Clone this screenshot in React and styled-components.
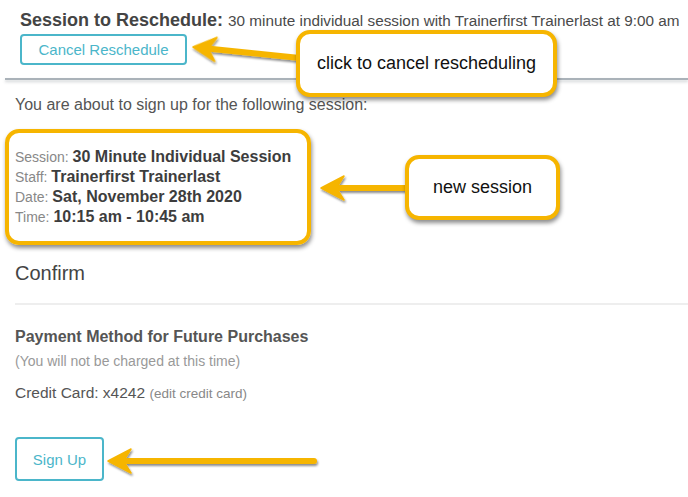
import React from 'react';
import styled, { createGlobalStyle } from 'styled-components';

const colors = {
  text: '#555',
  dark: '#3d3d3d',
  muted: '#999',
  teal: '#4bb6ca',
  orange: '#f6b500',
};

const GlobalStyle = createGlobalStyle`
  html, body { margin: 0; padding: 0; background: #fff; }
  body {
    font-family: "Liberation Sans", Arial, sans-serif;
    color: ${colors.text};
    -webkit-font-smoothing: antialiased;
  }
`;

const Page = styled.div`
  position: relative;
  width: 688px;
  height: 497px;
  overflow: hidden;
`;

const Header = styled.header`
  padding: 10px 0 0 20px;
`;

const RescheduleLine = styled.div`
  height: 20px;
  line-height: 20px;
  font-size: 15.3px;
  color: #4a4a4a;
  white-space: nowrap;

  strong {
    font-size: 18px;
    color: #444;
    margin-right: 5px;
  }
`;

const OutlineButton = styled.button`
  display: flex;
  align-items: center;
  justify-content: center;
  box-sizing: border-box;
  width: ${(p) => p.$w}px;
  height: ${(p) => p.$h}px;
  margin-top: ${(p) => p.$top || 0}px;
  padding: 0;
  background: #fff;
  border: 2px solid ${colors.teal};
  border-radius: 4px;
  font-family: "Liberation Sans", Arial, sans-serif;
  font-size: 15px;
  color: ${colors.teal};
  cursor: pointer;
`;

const Rule = styled.div`
  margin: 13px 0 0 5px;
  height: 2px;
  background: #aab2b9;
  box-shadow: 0 2px 3px rgba(60, 70, 80, 0.25);
`;

const Main = styled.main`
  padding: 15px 0 0 15px;
`;

const Intro = styled.p`
  margin: 0;
  height: 20px;
  line-height: 20px;
  font-size: 16px;
  color: ${colors.text};
`;

const Details = styled.div`
  position: relative;
  margin-top: 32px;
`;

const DetailRow = styled.div`
  height: 20px;
  line-height: 20px;
  font-size: 14px;
  color: #888;

  strong {
    font-size: 16px;
    color: ${colors.dark};
  }
`;

const Confirm = styled.h2`
  margin: 34px 0 0;
  height: 24px;
  line-height: 24px;
  font-size: 20px;
  font-weight: normal;
  color: #444;
`;

const Divider = styled.div`
  margin-top: 18px;
  height: 2px;
  background: #eeeeee;
`;

const PaymentTitle = styled.h3`
  margin: 22px 0 0;
  height: 20px;
  line-height: 20px;
  font-size: 16px;
  font-weight: bold;
  color: ${colors.text};
`;

const Note = styled.p`
  margin: 5px 0 0;
  height: 18px;
  line-height: 18px;
  font-size: 14px;
  color: ${colors.muted};
`;

const CardLine = styled.p`
  margin: 13px 0 0;
  height: 20px;
  line-height: 20px;
  font-size: 15.5px;
  color: ${colors.text};

  small {
    font-size: 13.5px;
    color: #888;
  }
`;

/* annotation layer */

const Callout = styled.div`
  position: absolute;
  left: ${(p) => p.$x}px;
  top: ${(p) => p.$y}px;
  width: ${(p) => p.$w}px;
  height: ${(p) => p.$h}px;
  box-sizing: border-box;
  display: flex;
  align-items: center;
  justify-content: center;
  border: 4px solid ${colors.orange};
  border-radius: 14px;
  background: #fff;
  box-shadow: 1px 3px 4px rgba(0, 0, 0, 0.45);
  font-size: 18px;
  color: #111;
  z-index: 2;
`;

const Frame = styled.div`
  position: absolute;
  left: -10px;
  top: -18px;
  width: 306px;
  height: 116px;
  box-sizing: border-box;
  border: 4px solid ${colors.orange};
  border-radius: 14px;
  box-shadow: 1px 3px 4px rgba(0, 0, 0, 0.45);
  pointer-events: none;
`;

const Arrows = styled.svg`
  position: absolute;
  inset: 0;
  z-index: 1;
  pointer-events: none;
`;

function Arrow({ from, to }) {
  const dx = from[0] - to[0];
  const dy = from[1] - to[1];
  const len = Math.sqrt(dx * dx + dy * dy);
  const angle = (Math.atan2(dy, dx) * 180) / Math.PI;
  return (
    <g transform={`translate(${to[0]} ${to[1]}) rotate(${angle})`} filter="url(#shadow)">
      <line x1="14" y1="0" x2={len} y2="0" stroke={colors.orange} strokeWidth="6" strokeLinecap="round" />
      <path d="M0 0 L23 -12 L17 -2.5 L17 2.5 L23 12 Z" fill={colors.orange} stroke={colors.orange} strokeWidth="1.5" strokeLinejoin="round" />
    </g>
  );
}

export default function App() {
  return (
    <>
      <GlobalStyle />
      <Page>
        <Header>
          <RescheduleLine>
            <strong>Session to Reschedule:</strong>
            30 minute individual session with Trainerfirst Trainerlast at 9:00 am
          </RescheduleLine>
          <OutlineButton $w={167} $h={31} $top={4}>Cancel Reschedule</OutlineButton>
        </Header>
        <Rule />
        <Main>
          <Intro>You are about to sign up for the following session:</Intro>
          <Details>
            <Frame />
            <DetailRow>Session: <strong>30 Minute Individual Session</strong></DetailRow>
            <DetailRow>Staff: <strong>Trainerfirst Trainerlast</strong></DetailRow>
            <DetailRow>Date: <strong>Sat, November 28th 2020</strong></DetailRow>
            <DetailRow>Time: <strong>10:15 am - 10:45 am</strong></DetailRow>
          </Details>
          <Confirm>Confirm</Confirm>
          <Divider />
          <PaymentTitle>Payment Method for Future Purchases</PaymentTitle>
          <Note>(You will not be charged at this time)</Note>
          <CardLine>Credit Card: x4242 <small>(edit credit card)</small></CardLine>
          <OutlineButton $w={89} $h={44} $top={34}>Sign Up</OutlineButton>
        </Main>

        <Arrows width="688" height="497" viewBox="0 0 688 497">
          <defs>
            <filter id="shadow" x="-20%" y="-50%" width="140%" height="200%">
              <feDropShadow dx="1" dy="2" stdDeviation="1.3" floodColor="#000" floodOpacity="0.45" />
            </filter>
          </defs>
          <Arrow from={[300, 58]} to={[193, 47]} />
          <Arrow from={[408, 188]} to={[321, 188]} />
          <Arrow from={[314, 461]} to={[108, 461]} />
        </Arrows>

        <Callout $x={296} $y={30} $w={261} $h={67}>click to cancel rescheduling</Callout>
        <Callout $x={405} $y={155} $w={155} $h={65}>new session</Callout>
      </Page>
    </>
  );
}
